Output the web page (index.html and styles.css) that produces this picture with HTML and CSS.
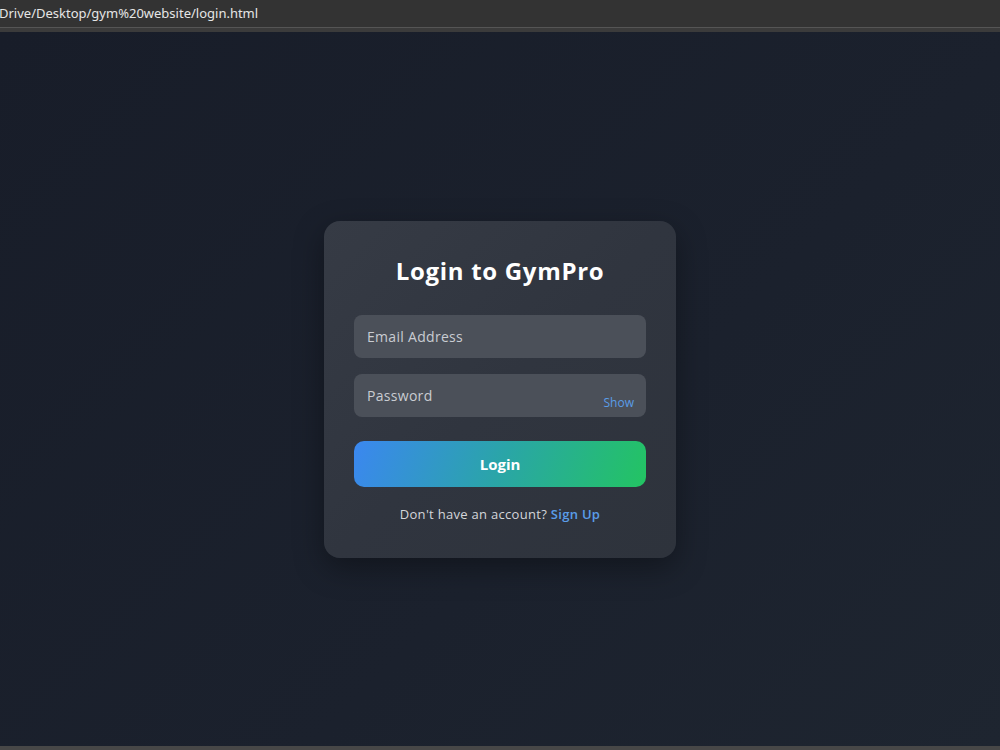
FILE: index.html
```html
<!DOCTYPE html>
<html lang="en">
<head>
    <meta charset="UTF-8">
    <meta name="viewport" content="width=device-width, initial-scale=1.0">
    <title>Login - GymPro</title>
    <link rel="stylesheet" href="styles.css">
</head>
<body>
    <div class="address-bar">
        <span class="address-text">Drive/Desktop/gym%20website/login.html</span>
    </div>

    <main class="page">
        <div class="login-card">
            <h1>Login to GymPro</h1>

            <form class="login-form">
                <input type="email" class="field" placeholder="Email Address">

                <div class="password-group">
                    <input type="password" class="field" placeholder="Password">
                    <span class="toggle-password">Show</span>
                </div>

                <button type="button" class="login-btn">Login</button>
            </form>

            <p class="signup-text">Don't have an account? <a href="#">Sign Up</a></p>
        </div>
    </main>

    <div class="bottom-edge"></div>
</body>
</html>
```

FILE: styles.css
```css
* {
    box-sizing: border-box;
}

body {
    margin: 0;
    height: 750px;
    overflow: hidden;
    font-family: "Open Sans", "Noto Sans", sans-serif;
    background-color: #1b202c;
}

.address-bar {
    height: 32px;
    background-color: #333333;
    border-bottom: 4px solid #3b3b3b;
    box-shadow: inset 0 -1px 0 #555555;
    display: flex;
    align-items: center;
    padding-bottom: 3px;
}

.address-text {
    font-family: "Noto Sans", "Open Sans", sans-serif;
    font-size: 13px;
    color: #e6e6e6;
    margin-left: -1px;
}

.page {
    height: 714px;
    display: flex;
    align-items: center;
    justify-content: center;
    background: linear-gradient(135deg, #181d29 0%, #1b212d 60%, #1e2530 100%);
}

.login-card {
    width: 352px;
    padding: 32px 30px 35px;
    background: linear-gradient(135deg, #363b45 0%, #30353f 50%, #2e333c 100%);
    border-radius: 16px;
    box-shadow: 0 10px 30px rgba(0, 0, 0, 0.35);
    text-align: center;
}

.login-card h1 {
    margin: 0 0 26px;
    font-size: 24px;
    line-height: 36px;
    font-weight: 700;
    letter-spacing: 0.7px;
    color: #ffffff;
}

.login-form {
    display: flex;
    flex-direction: column;
    gap: 16px;
}

.field {
    width: 100%;
    height: 43px;
    padding: 0 13px;
    border: none;
    border-radius: 8px;
    background-color: #4b5059;
    color: #ffffff;
    font-family: inherit;
    font-size: 14px;
    letter-spacing: 0.3px;
    outline: none;
}

.field::placeholder {
    color: #c9ccd2;
}

.password-group {
    position: relative;
}

.toggle-password {
    position: absolute;
    right: 12px;
    top: 20px;
    font-size: 12px;
    color: #5a9de8;
    cursor: pointer;
}

.login-btn {
    margin-top: 8px;
    height: 46px;
    border: none;
    border-radius: 10px;
    background: linear-gradient(110deg, #3b87f0 0%, #2aa5a8 50%, #23c462 100%);
    color: #ffffff;
    font-family: inherit;
    font-size: 15px;
    font-weight: 700;
    cursor: pointer;
}

.signup-text {
    margin: 18px 0 0;
    font-size: 13px;
    letter-spacing: 0.3px;
    color: #d4d6da;
}

.signup-text a {
    color: #5a9de8;
    font-weight: 600;
    text-decoration: none;
}

.bottom-edge {
    height: 4px;
    background-color: #474747;
}
```
